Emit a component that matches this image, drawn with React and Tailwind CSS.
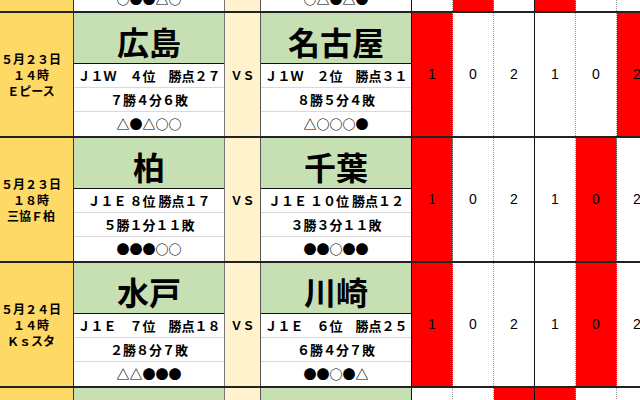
import React from 'react';

const matches = [
  {
    date: ['５月２２日', '１４時', '　'],
    home: { name: '鹿島', rec: 'Ｊ１Ｅ　３位　勝点２８', wdl: '８勝４分５敗', form: '○●●△○' },
    away: { name: '浦和', rec: 'Ｊ１Ｅ　５位　勝点２６', wdl: '７勝５分５敗', form: '○△●△●' },
    nums: [['1', false], ['0', true], ['2', false], ['1', true], ['0', false], ['2', false]],
  },
  {
    date: ['５月２３日', '１４時', 'Ｅピース'],
    home: { name: '広島', rec: 'Ｊ１Ｗ　４位　勝点２７', wdl: '７勝４分６敗', form: '△●△○○' },
    away: { name: '名古屋', rec: 'Ｊ１Ｗ　２位　勝点３１', wdl: '８勝５分４敗', form: '△○○○●' },
    nums: [['1', true], ['0', false], ['2', false], ['1', false], ['0', false], ['2', true]],
  },
  {
    date: ['５月２３日', '１８時', '三協Ｆ柏'],
    home: { name: '柏', rec: 'Ｊ１Ｅ ８位 勝点１７', wdl: '５勝１分１１敗', form: '●●●○○' },
    away: { name: '千葉', rec: 'Ｊ１Ｅ １０位 勝点１２', wdl: '３勝３分１１敗', form: '●●○●●' },
    nums: [['1', true], ['0', false], ['2', false], ['1', false], ['0', true], ['2', false]],
  },
  {
    date: ['５月２４日', '１４時', 'Ｋｓスタ'],
    home: { name: '水戸', rec: 'Ｊ１Ｅ　７位　勝点１８', wdl: '２勝８分７敗', form: '△△●●●' },
    away: { name: '川崎', rec: 'Ｊ１Ｅ　６位　勝点２５', wdl: '６勝４分７敗', form: '●●○●△' },
    nums: [['1', true], ['0', false], ['2', false], ['1', false], ['0', true], ['2', false]],
  },
  {
    date: ['５月２４日', '１９時', '　'],
    home: { name: '仙台', rec: 'Ｊ１Ｅ　９位　勝点１５', wdl: '４勝３分９敗', form: '●○●●△' },
    away: { name: 'Ｇ大阪', rec: 'Ｊ１Ｗ　３位　勝点２９', wdl: '８勝５分４敗', form: '○○△●○' },
    nums: [['1', false], ['0', false], ['2', true], ['1', true], ['0', false], ['2', false]],
  },
];

// right edge style of each number column: dotted, dotted, solid, dotted, dotted, dotted
const numBorders = [
  'border-r border-dotted border-[#9a9a9a]',
  'border-r border-dotted border-[#9a9a9a]',
  'border-r border-solid border-[#111]',
  'border-r border-dotted border-[#9a9a9a]',
  'border-r border-dotted border-[#9a9a9a]',
  'border-r border-dotted border-[#9a9a9a]',
];

function Team({ team, edge }) {
  return (
    <div className={`w-[151px] shrink-0 flex flex-col ${edge}`}>
      <div className="h-[51px] bg-[#c6e0b4] border-b border-[#111] flex items-center justify-center pt-[6px] text-[32px] leading-none font-bold text-black">
        {team.name}
      </div>
      <div className="h-[24px] border-b border-[#d9d9d9] flex items-center justify-center whitespace-nowrap text-[13px] font-bold">
        {team.rec}
      </div>
      <div className="h-[24px] border-b border-[#d9d9d9] flex items-center justify-center whitespace-nowrap text-[13px] font-bold">
        {team.wdl}
      </div>
      <div className="h-[24px] flex items-center justify-center whitespace-nowrap text-[13px] font-bold">
        {team.form}
      </div>
    </div>
  );
}

function MatchRow({ m }) {
  return (
    <div className="flex h-[125px] border-t-2 border-[#222]">
      <div className="w-[85px] shrink-0 bg-[#ffd966] border-r border-[#333] flex flex-col items-center justify-center text-[12px] leading-[16px] font-bold">
        {m.date.map((d, i) => (
          <span key={i} className="whitespace-nowrap">{d}</span>
        ))}
      </div>
      <Team team={m.home} edge="border-r border-[#777]" />
      <div className="w-[36px] shrink-0 bg-[#fff2cc] border-r border-[#555] flex items-center justify-center text-[12px] font-bold">
        ＶＳ
      </div>
      <Team team={m.away} edge="border-r border-[#111]" />
      {m.nums.map(([v, red], i) => (
        <div
          key={i}
          className={`w-[41px] shrink-0 flex items-center justify-center text-[14px] font-['Liberation_Sans',Arial,sans-serif] ${numBorders[i]} ${red ? 'bg-[#ff0000]' : 'bg-white'}`}
        >
          {v}
        </div>
      ))}
    </div>
  );
}

export default function App() {
  return (
    <div className="w-[640px] h-[400px] overflow-hidden bg-white text-black font-['Noto_Sans_CJK_JP','Noto_Sans',sans-serif]">
      <div className="w-[700px] -ml-[11px] -mt-[114px] flex flex-col">
        {matches.map((m, i) => (
          <MatchRow key={i} m={m} />
        ))}
      </div>
    </div>
  );
}
